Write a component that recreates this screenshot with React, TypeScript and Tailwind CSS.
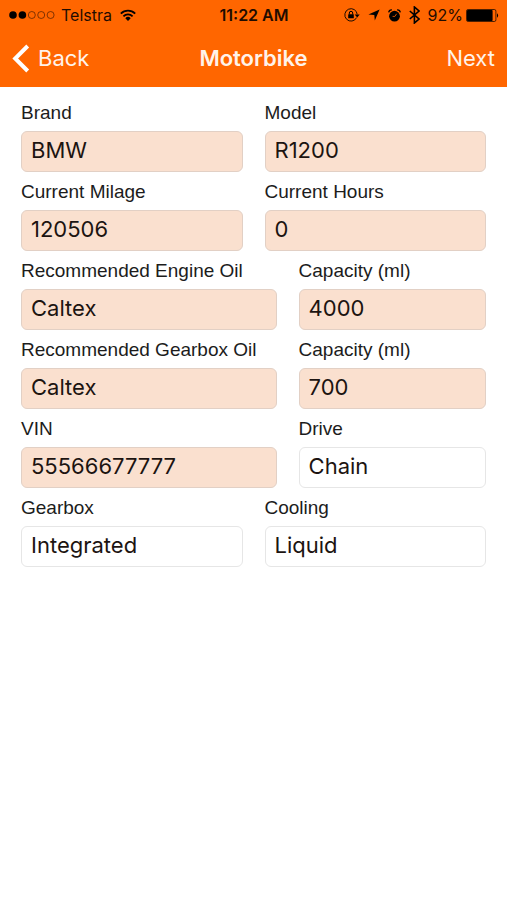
import React, { useState } from 'react';

type FieldProps = {
  id: string;
  label: string;
  value: string;
  options?: string[];
};

const Field = ({ id, label, value, options }: FieldProps) => {
  const [current, setCurrent] = useState(value);
  const base =
    "block h-[41px] w-full appearance-none rounded-md border px-[9px] pb-[3px] font-['Inter',sans-serif] text-[22px] text-[#1c1411] outline-none";

  return (
    <div className="min-w-0">
      <label
        htmlFor={id}
        className="block h-[38px] pt-[2px] font-['Liberation_Sans',sans-serif] text-[19px] leading-9 whitespace-nowrap text-[#1c1c1c]"
      >
        {label}
      </label>
      {options ? (
        <select
          id={id}
          value={current}
          onChange={(e) => setCurrent(e.target.value)}
          className={`${base} border-[#e6e6e6] bg-white`}
        >
          {options.map((option) => (
            <option key={option}>{option}</option>
          ))}
        </select>
      ) : (
        <input
          id={id}
          type="text"
          value={current}
          onChange={(e) => setCurrent(e.target.value)}
          className={`${base} border-[#e2d0c5] bg-[#fae0cf]`}
        />
      )}
    </div>
  );
};

const SignalDots = () => (
  <svg width="46" height="10" viewBox="0 0 46 10" aria-hidden="true">
    <circle cx="4" cy="5" r="3.8" />
    <circle cx="13.4" cy="5" r="3.8" />
    <g fill="none" stroke="#4a1d00" strokeWidth="0.7">
      <circle cx="22.8" cy="5" r="3.5" />
      <circle cx="32.2" cy="5" r="3.5" />
      <circle cx="41.6" cy="5" r="3.5" />
    </g>
  </svg>
);

const WifiIcon = () => (
  <svg width="16" height="12" viewBox="0 0 16 12" aria-hidden="true">
    <g fill="none" stroke="#000" strokeWidth="1.8">
      <path d="M0.8 4.6a10.2 10.2 0 0 1 14.4 0" />
      <path d="M3.4 7.3a6.5 6.5 0 0 1 9.2 0" />
    </g>
    <path d="M8 12 5.3 9.2a3.8 3.8 0 0 1 5.4 0z" />
  </svg>
);

const RotationLockIcon = () => (
  <svg width="16" height="14" viewBox="0 0 16 14" aria-hidden="true">
    <path d="M12.6 9.6A6.2 6.2 0 1 1 13.2 6.4" fill="none" stroke="#000" strokeWidth="0.9" />
    <path d="M10.7 6.4h5l-2.5 3.2z" />
    <rect x="4.2" y="6.3" width="5.6" height="4" rx="0.4" />
    <path d="M5.3 6.5V5a1.7 1.7 0 0 1 3.4 0v1.5" fill="none" stroke="#000" strokeWidth="1" />
  </svg>
);

const LocationIcon = () => (
  <svg width="12" height="12" viewBox="0 0 12 12" aria-hidden="true">
    <path d="M11.6 0.4 6.8 11.6 6.3 5.9 0.4 5.6z" />
  </svg>
);

const AlarmIcon = () => (
  <svg width="13" height="13" viewBox="0 0 13 13" aria-hidden="true">
    <circle cx="6.5" cy="7.2" r="5.4" />
    <path d="M0.7 3.4A3 3 0 0 1 3.9 0.9M9.1 0.9a3 3 0 0 1 3.2 2.5" fill="none" stroke="#000" strokeWidth="1.3" />
    <path d="M8.6 4.8 6.9 7.4H4.6" fill="none" stroke="#ff6600" strokeWidth="0.8" />
  </svg>
);

const BluetoothIcon = () => (
  <svg width="11" height="18" viewBox="0 0 11 18" aria-hidden="true">
    <path d="M0.8 5 10 13l-4.6 4V1L10 5l-9.2 8" fill="none" stroke="#000" strokeWidth="1.6" />
  </svg>
);

const BatteryIcon = () => (
  <svg width="33" height="13" viewBox="0 0 33 13" aria-hidden="true">
    <rect x="0.5" y="0.5" width="29.4" height="12" rx="1.6" fill="none" stroke="#000" strokeWidth="0.7" />
    <rect x="1" y="1" width="25.6" height="11" rx="0.8" />
    <path d="M31 4.2a3 3 0 0 1 0 4.6z" />
  </svg>
);

const StatusBar = () => (
  <div className="grid h-[30px] grid-cols-[1fr_auto_1fr] items-center pr-2 pl-[9px] text-[16px] text-[#1f0c00]">
    <div className="flex items-center">
      <SignalDots />
      <span className="ml-[6px]">Telstra</span>
      <span className="ml-2">
        <WifiIcon />
      </span>
    </div>
    <span className="font-semibold">11:22 AM</span>
    <div className="flex items-center justify-end gap-2">
      <RotationLockIcon />
      <LocationIcon />
      <AlarmIcon />
      <BluetoothIcon />
      <div className="flex items-center gap-[3px]">
        <span>92%</span>
        <BatteryIcon />
      </div>
    </div>
  </div>
);

const NavBar = () => (
  <nav className="grid h-[57px] grid-cols-[1fr_auto_1fr] items-center px-3 text-[22px] text-[#fff3ea]">
    <button type="button" className="flex items-center gap-2 justify-self-start">
      <svg width="18" height="29" viewBox="0 0 18 29" fill="none" aria-hidden="true">
        <path d="M15.7 2 3.2 14.5 15.7 27" stroke="#fff" strokeWidth="4" />
      </svg>
      Back
    </button>
    <h1 className="font-semibold">Motorbike</h1>
    <button type="button" className="justify-self-end">
      Next
    </button>
  </nav>
);

const App = () => {
  return (
    <div className="min-h-screen bg-white">
      <header className="bg-[#ff6600] font-['Inter',sans-serif]">
        <StatusBar />
        <NavBar />
      </header>

      <form className="px-[21px] pt-[6px]">
        {/* Bike details */}
        <div className="grid grid-cols-2 gap-x-[22px]">
          <Field id="brand" label="Brand" value="BMW" />
          <Field id="model" label="Model" value="R1200" />
          <Field id="milage" label="Current Milage" value="120506" />
          <Field id="hours" label="Current Hours" value="0" />
        </div>

        {/* Oils and VIN, wider left column */}
        <div className="grid grid-cols-[15fr_11fr] gap-x-[22px]">
          <Field id="engine-oil" label="Recommended Engine Oil" value="Caltex" />
          <Field id="engine-capacity" label="Capacity (ml)" value="4000" />
          <Field id="gearbox-oil" label="Recommended Gearbox Oil" value="Caltex" />
          <Field id="gearbox-capacity" label="Capacity (ml)" value="700" />
          <Field id="vin" label="VIN" value="55566677777" />
          <Field id="drive" label="Drive" value="Chain" options={['Chain', 'Belt', 'Shaft']} />
        </div>

        <div className="grid grid-cols-2 gap-x-[22px]">
          <Field id="gearbox" label="Gearbox" value="Integrated" options={['Integrated', 'Separate']} />
          <Field id="cooling" label="Cooling" value="Liquid" options={['Liquid', 'Air', 'Oil']} />
        </div>
      </form>
    </div>
  );
};

export default App;
